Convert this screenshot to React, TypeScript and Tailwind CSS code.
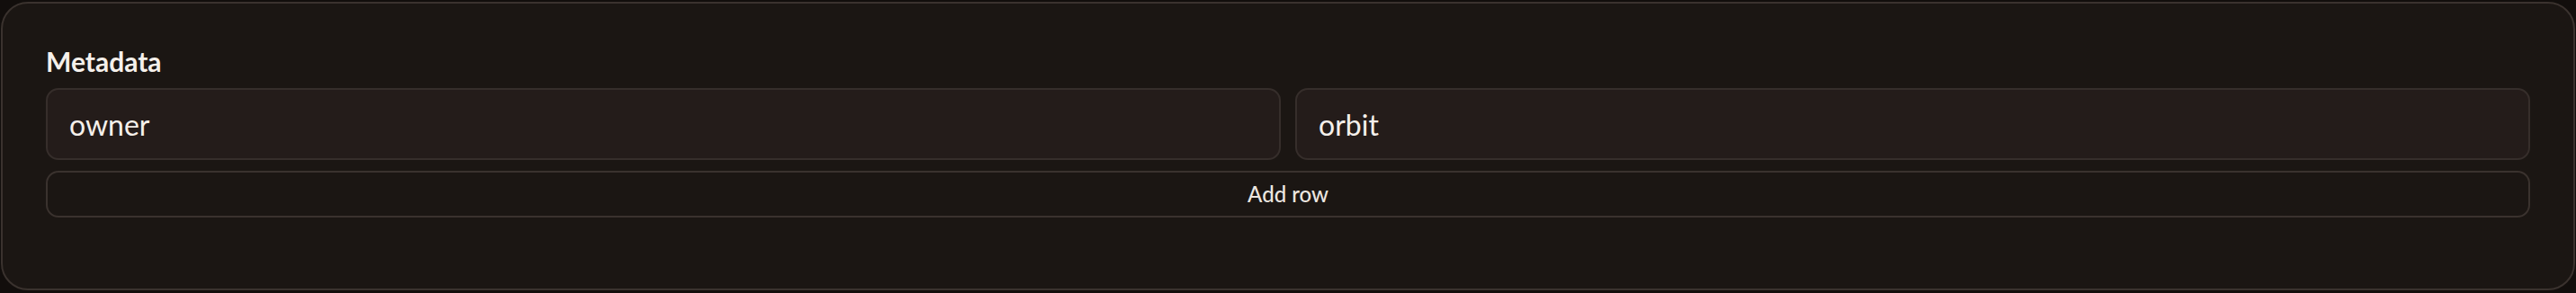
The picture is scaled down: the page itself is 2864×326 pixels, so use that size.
import { useState } from 'react';

interface MetaRow {
  key: string;
  value: string;
}

export default function App() {
  const [rows, setRows] = useState<MetaRow[]>([{ key: 'owner', value: 'orbit' }]);

  const updateRow = (index: number, field: keyof MetaRow, value: string) => {
    setRows(rows.map((row, i) => (i === index ? { ...row, [field]: value } : row)));
  };

  return (
    <div className="min-h-[326px] w-full bg-[#120e0c] pt-[2px] px-[1px] pb-[3px] font-['Lato',sans-serif]">
      <div className="rounded-[30px] border-2 border-[#3a322e] bg-[#1b1613] px-[48px] pt-[46px] pb-[79px]">
        {/* Title */}
        <h2 className="text-[30px] leading-[36px] font-bold text-[#f5f0eb]">Metadata</h2>

        {/* Rows */}
        <div className="mt-[12px] flex flex-col gap-[12px]">
          {rows.map((row, i) => (
            <div key={i} className="flex gap-[16px]">
              <input
                value={row.key}
                onChange={(e) => updateRow(i, 'key', e.target.value)}
                className="h-[80px] flex-1 min-w-0 rounded-[14px] border-2 border-[#362e2b] bg-[#241c1a] px-[24px] text-[32px] text-[#f5f0eb] outline-none"
              />
              <input
                value={row.value}
                onChange={(e) => updateRow(i, 'value', e.target.value)}
                className="h-[80px] flex-1 min-w-0 rounded-[14px] border-2 border-[#362e2b] bg-[#241c1a] px-[24px] text-[32px] text-[#f5f0eb] outline-none"
              />
            </div>
          ))}

          {/* Add row */}
          <button
            onClick={() => setRows([...rows, { key: '', value: '' }])}
            className="h-[52px] w-full rounded-[14px] border-2 border-[#3a322e] bg-[#1b1613] text-[24px] font-medium text-[#ece6e0]"
          >
            Add row
          </button>
        </div>
      </div>
    </div>
  );
}
